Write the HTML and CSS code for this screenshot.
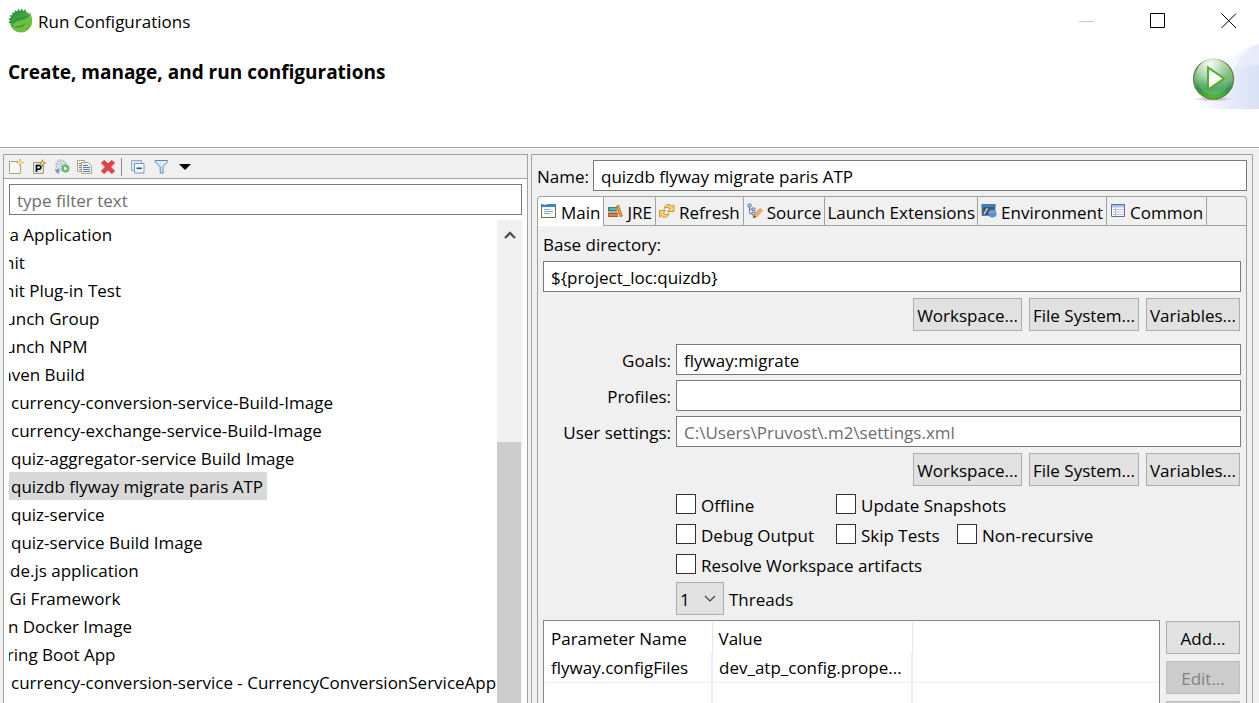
FILE: index.html
```html
<!DOCTYPE html>
<html lang="en">
<head>
<meta charset="utf-8">
<title>Run Configurations</title>
<link rel="stylesheet" href="styles.css">
</head>
<body>
<div class="window">
  <header class="titlebar">
    <svg class="app-icon" width="25" height="25" viewBox="0 0 25 25" aria-hidden="true">
      <defs><linearGradient id="leaf" x1="0" y1="0" x2="0.6" y2="1"><stop offset="0" stop-color="#1f8a43"/><stop offset="1" stop-color="#7cc142"/></linearGradient></defs>
      <circle cx="13" cy="12.500" r="11" fill="url(#leaf)"/>
      <path d="M2 14A11.300 11.300 0 0 1 19 3" fill="none" stroke="#2a9048" stroke-width="2.500" stroke-dasharray="1.600 1.500"/>
      <path d="M22 3c0 5-3 7-8 8-5 .8-9 2-9 6 0 2 .6 3 1.500 4 8 4 16 0 17-7 .5-4 .3-8-1.500-11z" fill="#70bd44"/>
      <path d="M6 17.500c2 2 9 1.500 12-3.500-3 2.500-6 3.300-8 3.500-2 .2-3 .2-4 0z" fill="#16853f"/>
      <path d="M22 3c-2 4-5 4.500-9 5-6 1-9 4-8 8 1-3 5-4 9-5 5-1 8-3 8-8z" fill="#16853f" opacity=".45"/>
    </svg>
    <span class="title">Run Configurations</span>
    <div class="window-controls">
      <button class="win-btn" disabled aria-label="Minimize"><svg width="16" height="16" viewBox="0 0 16 16"><path d="M0 8.500h15" stroke="#c8c8c8"/></svg></button>
      <button class="win-btn" aria-label="Maximize"><svg width="16" height="16" viewBox="0 0 16 16"><path d="M.5 .5h14v14H.5z" fill="none" stroke="#000"/></svg></button>
      <button class="win-btn" aria-label="Close"><svg width="16" height="16" viewBox="0 0 16 16"><path d="M.5 .5l14.500 14.500M15 .5L.5 15" stroke="#000"/></svg></button>
    </div>
  </header>

  <section class="banner">
    <h1 class="heading">Create, manage, and run configurations</h1>
    <svg class="banner-art" width="134" height="67" viewBox="0 -1 134 67" aria-hidden="true">
      <defs>
        <linearGradient id="fade" x1="0" x2="1"><stop offset=".1" stop-color="#d9e2f5" stop-opacity="0"/><stop offset="1" stop-color="#d9e2f5"/></linearGradient>
        <linearGradient id="orb" x1="0" y1="0" x2="0" y2="1"><stop offset="0" stop-color="#9ccb8f"/><stop offset=".5" stop-color="#78bb78"/><stop offset=".75" stop-color="#2d9150"/><stop offset="1" stop-color="#4fc81c"/></linearGradient>
        <radialGradient id="gleam" cx=".4" cy=".2" r=".6"><stop offset="0" stop-color="#fff" stop-opacity=".95"/><stop offset="1" stop-color="#fff" stop-opacity="0"/></radialGradient>
        <radialGradient id="shade"><stop offset="0" stop-color="#705a70" stop-opacity=".6"/><stop offset="1" stop-color="#705a70" stop-opacity="0"/></radialGradient>
      </defs>
      <path d="M134 1C118 5 106 14 98 26 90 40 80 56 66 66h68z" fill="url(#fade)" opacity=".5"/>
      <path d="M134 1c-12 5-20 15-26 27 8-4 17-6 26-6z" fill="#e6ecf9"/>
      <path d="M134 22c-31 1-45 17-66 44h66z" fill="url(#fade)"/>
      <ellipse cx="88" cy="56" rx="20" ry="2.500" fill="url(#shade)"/>
      <circle cx="88.500" cy="36" r="20" fill="url(#orb)" stroke="#65773b" stroke-width="1.200"/>
      <circle cx="88.500" cy="36" r="16" fill="#79bd87" opacity=".5"/>
      <circle cx="88.500" cy="32" r="17" fill="url(#gleam)"/>
      <path d="M83 24.500v22l16-11z" fill="#fff" stroke="#55ae24" stroke-width="2"/>
    </svg>
  </section>

  <main class="content">
    <section class="panel nav-panel" aria-label="Configurations">
      <div class="toolbar" role="toolbar">
        <button class="tool" aria-label="New launch configuration"><svg width="16" height="16" viewBox="0 0 16 16"><path d="M1.500 2.500h8l3 3v9h-11z" fill="#f4f7fc" stroke="#b3a474"/><path d="M12 0v7M8.500 3.500h7" stroke="#d9b13b" stroke-width="1.500"/><path d="M12 2.500v2M11 3.500h2" stroke="#fff"/></svg></button>
        <button class="tool" aria-label="New prototype"><svg width="16" height="16" viewBox="0 0 16 16"><path d="M2.500 3.500h7l3 3v8h-10z" fill="#dce6f5" stroke="#a99c72"/><path d="M5.500 13V6.500H8a1.800 1.800 0 0 1 0 3.700H5.500" fill="none" stroke="#000" stroke-width="1.600"/><path d="M11.500 0l1.200 2.800L15.500 4l-2.800 1.200-1.200 2.800-1.200-2.800L7.500 4l2.800-1.200z" fill="#b78b18"/><path d="M11.500 3v2M10.500 4h2" stroke="#fff"/></svg></button>
        <button class="tool" aria-label="Export"><svg width="16" height="16" viewBox="0 0 16 16"><circle cx="7" cy="6" r="4.500" fill="#e7eaf1" stroke="#b9bed0" stroke-width="2.500" stroke-dasharray="2 .8"/><circle cx="7" cy="6" r="1.500" fill="#fff" stroke="#a8acc4"/><circle cx="11.500" cy="9.500" r="4" fill="#65bb75"/><path d="M10.300 7.500v4l3.200-2z" fill="#fff"/><path d="M1 11h3.500v3.500M4.500 11L2 13.500" fill="none" stroke="#7591bb" stroke-width="1.500"/></svg></button>
        <button class="tool" aria-label="Duplicate"><svg width="16" height="16" viewBox="0 0 16 16"><path d="M.5 1.500h7v11h-7z" fill="#fff" stroke="#b5a576"/><path d="M4.500 3.500h7l3 3v8h-10z" fill="#eaf1fb" stroke="#b5a576"/><path d="M2 4.500h2M2 6.500h2M2 8.500h2M2 10.500h2M6 6.500h5M6 8.500h7M6 10.500h7M6 12.500h7" stroke="#5e7fae"/></svg></button>
        <button class="tool" aria-label="Delete"><svg width="16" height="16" viewBox="0 0 16 16"><path d="M1.500 4L4 1.500 8 5l4-3.500L14.500 4l-4 4 4 4-2.500 2.500-4-3.800-4 3.800L1.500 12l4-4z" fill="#e84242" stroke="#cf3434"/></svg></button>
        <span class="tool-divider"></span>
        <button class="tool" aria-label="Collapse all"><svg width="16" height="16" viewBox="0 0 16 16"><path d="M11.500 4V1.500h-10v10H4" fill="#d9e7f6" stroke="#92a9c4"/><path d="M4.500 4.500h9.500V14H4.500z" fill="#f4faff" stroke="#7998ba"/><path d="M6.500 9.300h5.500" stroke="#1f5fa8" stroke-width="1.600"/></svg></button>
        <button class="tool" aria-label="Filter"><svg width="16" height="16" viewBox="0 0 16 16"><path d="M2 1.500h12.500v1.200L10 7.500V14H7.200V7.500L2 2.700z" fill="#dcecf9" stroke="#6288b0"/></svg></button>
        <button class="tool" aria-label="Filter menu"><svg width="16" height="16" viewBox="0 0 16 16"><path d="M3 5h12l-6 6z" fill="#000"/></svg></button>
      </div>
      <input class="field filter" type="text" placeholder="type filter text" aria-label="Filter text">
      <div class="tree-area">
        <div class="tree-view">
          <ul class="tree">
            <li class="node">Java Application</li>
            <li class="node">JUnit</li>
            <li class="node">JUnit Plug-in Test</li>
            <li class="node">Launch Group</li>
            <li class="node">Launch NPM</li>
            <li class="node">Maven Build</li>
            <li class="node child">currency-conversion-service-Build-Image</li>
            <li class="node child">currency-exchange-service-Build-Image</li>
            <li class="node child">quiz-aggregator-service Build Image</li>
            <li class="node child selected">quizdb flyway migrate paris ATP</li>
            <li class="node child">quiz-service</li>
            <li class="node child">quiz-service Build Image</li>
            <li class="node">Node.js application</li>
            <li class="node">OSGi Framework</li>
            <li class="node">Run Docker Image</li>
            <li class="node">Spring Boot App</li>
            <li class="node child">currency-conversion-service - CurrencyConversionServiceApplication</li>
          </ul>
        </div>
        <div class="scrollbar">
          <button class="scroll-up" aria-label="Scroll up"><svg width="12" height="10" viewBox="0 0 12 10"><path d="M1 8l5-5 5 5" fill="none" stroke="#505050" stroke-width="2.400"/></svg></button>
          <div class="scroll-thumb"></div>
        </div>
      </div>
    </section>

    <section class="panel edit-panel" aria-label="Configuration">
      <div class="name-row">
        <label for="name">Name:</label>
        <input class="field" id="name" type="text" value="quizdb flyway migrate paris ATP">
      </div>
      <div class="tab-folder">
        <div class="tabs" role="tablist">
          <button class="tab active" role="tab" aria-selected="true"><svg width="16" height="16" viewBox="0 0 16 16"><path d="M.5 1.500h14v13H.5z" fill="#f5fbff" stroke="#80712f"/><path d="M0 1h15v3H0z" fill="#3d86c6"/><path d="M2 1.500h4" stroke="#b5d8f2"/><path d="M3 6.500h6M3 8.500h9M3 10.500h6" stroke="#88a9d4"/></svg>Main</button>
          <button class="tab" role="tab"><svg width="16" height="16" viewBox="0 0 16 16"><path d="M1 4h9v4.500H1z" fill="#2d8c79"/><path d="M3 6h7" stroke="#b6dfd3"/><path d="M1 9.500h10V14H1z" fill="#b3542a"/><path d="M2 12h9" stroke="#e8b994"/><path d="M9.500 3l2-1L15.500 13l-2.500 1z" fill="#e5942f" stroke="#b86a1c" stroke-width=".6"/></svg>JRE</button>
          <button class="tab" role="tab"><svg width="16" height="16" viewBox="0 0 16 16"><path d="M5 5.500C6 1 11 .5 13 3.500L15 2v6.500H8.500L11 6C10 4 7 4 5 5.500z" fill="#f5d374" stroke="#c68a27" stroke-width=".9"/><path d="M10 10.500C9 15 4 15.500 2.500 12.500L.5 14V7.500h6L4.500 10c1 2 3.500 2 5.500 .5z" fill="#f5d374" stroke="#c68a27" stroke-width=".9"/></svg>Refresh</button>
          <button class="tab" role="tab"><svg width="16" height="16" viewBox="0 0 16 16"><path d="M1 1h3v3H1zM5 5h3v2.500H5zM5 9h3v3H5z" fill="#cbdaf1" stroke="#6580b2"/><path d="M2.500 4v6.500H5M2.500 6.300H5" fill="none" stroke="#6580b2"/><path d="M6 15l1.500-4L13 5.500l2.500 2L10 13.500z" fill="#f2b35f" stroke="#c3803b" stroke-width=".7"/><path d="M6 15l1-2.800 2 1.800z" fill="#5d4636"/></svg>Source</button>
          <button class="tab text-tab" role="tab">Launch Extensions</button>
          <button class="tab" role="tab"><svg width="16" height="16" viewBox="0 0 16 16"><path d="M1 1.500h13v11H1z" fill="#43566f" stroke="#6f849b"/><path d="M.5 1h14v3H.5z" fill="#3c80bd"/><path d="M3 11l3-5M7 6H5" stroke="#dfe9f2" stroke-width="1.200"/><circle cx="11.500" cy="10.500" r="4" fill="#5792cd"/><path d="M8.500 9c2 1 4-1 6 0" fill="none" stroke="#93bfe3"/></svg>Environment</button>
          <button class="tab" role="tab"><svg width="16" height="16" viewBox="0 0 16 16"><path d="M1.500 1.500h13v12h-13z" fill="#fff" stroke="#566f9b"/><path d="M2 2h12v2.500H2z" fill="#afc0dc"/><path d="M5.500 3v10M3 6.500h11M3 9h11M3 11.500h11" stroke="#b8c2d3"/></svg>Common</button>
        </div>
        <div class="tab-page">
          <label class="base-label" for="base">Base directory:</label>
          <input class="field" id="base" type="text" value="${project_loc:quizdb}">
          <div class="button-row">
            <button class="btn">Workspace...</button>
            <button class="btn">File System...</button>
            <button class="btn">Variables...</button>
          </div>
          <div class="form">
            <label for="goals">Goals:</label>
            <input class="field" id="goals" type="text" value="flyway:migrate">
            <label for="profiles">Profiles:</label>
            <input class="field" id="profiles" type="text">
            <label for="settings">User settings:</label>
            <input class="field" id="settings" type="text" placeholder="C:\Users\Pruvost\.m2\settings.xml">
          </div>
          <div class="button-row">
            <button class="btn">Workspace...</button>
            <button class="btn">File System...</button>
            <button class="btn">Variables...</button>
          </div>
          <div class="options">
            <label class="check"><input type="checkbox"><span>Offline</span></label>
            <label class="check wide"><input type="checkbox"><span>Update Snapshots</span></label>
            <label class="check"><input type="checkbox"><span>Debug Output</span></label>
            <label class="check"><input type="checkbox"><span>Skip Tests</span></label>
            <label class="check"><input type="checkbox"><span>Non-recursive</span></label>
            <label class="check full"><input type="checkbox"><span>Resolve Workspace artifacts</span></label>
          </div>
          <div class="threads">
            <div class="select-wrap">
              <select class="select" id="threads"><option>1</option><option>2</option><option>4</option></select>
              <svg class="chevron" width="12" height="8" viewBox="0 0 12 8" aria-hidden="true"><path d="M1 1l5 5 5-5" fill="none" stroke="#404040" stroke-width="1.200"/></svg>
            </div>
            <label for="threads">Threads</label>
          </div>
          <div class="params">
            <div class="table-box">
              <table class="table">
                <thead><tr><th class="col-name">Parameter Name</th><th class="col-value">Value</th><th></th></tr></thead>
                <tbody>
                  <tr><td>flyway.configFiles</td><td>dev_atp_config.prope...</td><td></td></tr>
                  <tr><td></td><td></td><td></td></tr>
                </tbody>
              </table>
            </div>
            <div class="side-buttons">
              <button class="btn">Add...</button>
              <button class="btn" disabled>Edit...</button>
              <button class="btn" disabled>Remove</button>
            </div>
          </div>
        </div>
      </div>
    </section>
  </main>
</div>
</body>
</html>
```
FILE: styles.css
```css
* { box-sizing: border-box; }

body {
  margin: 0;
  background: #fff;
  color: #000;
  font-family: "Open Sans", "Noto Sans", sans-serif;
  font-size: 17px;
  line-height: 28px;
}

button, input, select {
  margin: 0;
  font: inherit;
  color: inherit;
}

svg { display: block; flex: none; }

.window {
  display: flex;
  flex-direction: column;
  height: 100vh;
  overflow: hidden;
}

/* Title bar */
.titlebar {
  display: flex;
  align-items: center;
  flex: none;
  height: 42px;
  padding: 0 22px 0 8px;
  gap: 5px;
}
.title { padding-top: 2px; }
.window-controls { display: flex; margin-left: auto; gap: 55px; }
.win-btn {
  padding: 0;
  border: 0;
  background: none;
}

/* Banner */
.banner {
  display: flex;
  justify-content: space-between;
  flex: none;
  height: 106px;
  padding-left: 8px;
  border-bottom: 1px solid #a0a0a0;
}
.heading {
  margin: 16px 0 0;
  font-size: 19px;
  font-weight: 700;
  line-height: 28px;
}

/* Body */
.content {
  display: grid;
  grid-template-columns: 525fr 722fr;
  gap: 3px;
  flex: 1;
  min-height: 0;
  padding: 5px 6px 0 3px;
  border-top: 1px solid #fff;
  background: #f0f0f0;
}
.panel {
  display: flex;
  flex-direction: column;
  min-width: 0;
  min-height: 0;
  border: 1px solid #a0a0a0;
  border-bottom: 0;
}

.field {
  width: 100%;
  min-width: 0;
  height: 31px;
  padding: 2px 7px 0;
  border: 1px solid #7a7a7a;
  border-radius: 0;
  background: #fff;
}
.field::placeholder { color: #6d6d6d; opacity: 1; }

/* Left panel */
.nav-panel { background: #fff; }
.toolbar {
  display: flex;
  align-items: center;
  flex: none;
  height: 24px;
  padding-left: 4px;
  gap: 7px;
  border-bottom: 1px solid #a0a0a0;
  background: #f0f0f0;
}
.tool { padding: 0; border: 0; background: none; }
.tool-divider { width: 1px; height: 18px; margin: 0 1px 0 -2px; background: #8c8c8c; }
.filter { width: auto; flex: none; margin: 5px; }
.tree-area {
  display: flex;
  flex: 1;
  min-height: 0;
  margin: 0 5px;
}
.tree-view { flex: 1; min-width: 0; overflow: hidden; }
.tree { margin: 0 0 0 -24px; padding: 0; list-style: none; }
.node {
  width: max-content;
  height: 28px;
  padding: 1px 4px 0 2px;
  white-space: nowrap;
}
.child { margin-left: 24px; }
.selected { background: #d9d9d9; }
.scrollbar {
  display: flex;
  flex-direction: column;
  width: 25px;
  background: #f0f0f0;
}
.scroll-up {
  display: flex;
  justify-content: center;
  align-items: center;
  height: 30px;
  padding: 0;
  border: 0;
  background: none;
}
.scroll-thumb { flex: 1; margin: 192px 1px 0 0; background: #cdcdcd; }

/* Right panel */
.edit-panel { padding: 5px 5px 0; gap: 5px; }
.name-row { display: flex; align-items: center; flex: none; gap: 4px; }
.name-row label { padding-top: 2px; }
.tab-folder {
  display: flex;
  flex-direction: column;
  flex: 1;
  min-height: 0;
  border: 1px solid #a0a0a0;
  border-bottom: 0;
  border-radius: 4px 4px 0 0;
}
.tabs { display: flex; flex: none; height: 29px; border-bottom: 1px solid #a0a0a0; }
.tab {
  display: flex;
  align-items: flex-start;
  height: 28px;
  padding: 2px 3px 0;
  gap: 4px;
  border: 0;
  border-right: 1px solid #a0a0a0;
  background: #f0f0f0;
  white-space: nowrap;
}
.tab svg { margin-top: 4px; }
.text-tab { padding: 2px 2px 0; }
.tab.active { height: 29px; border-radius: 4px 0 0 0; background: #fff; }

.tab-page {
  display: flex;
  flex-direction: column;
  flex: 1;
  min-height: 0;
  padding: 5px 5px 0;
  overflow: hidden;
}
.tab-page > * { flex: none; }
.base-label { padding-bottom: 2px; }
.button-row { display: flex; justify-content: flex-end; gap: 7px; margin: 6px 1px 0 0; }
.btn {
  height: 33px;
  padding: 2px 3px 0;
  border: 1px solid #adadad;
  background: #e1e1e1;
  white-space: nowrap;
}
.btn:disabled { border-color: #bfbfbf; background: #ccc; color: #838383; }

.form {
  display: grid;
  grid-template-columns: 128px 1fr;
  gap: 5px;
  align-items: center;
  margin-top: 13px;
}
.form label { padding-top: 2px; text-align: right; }

.options {
  display: grid;
  grid-template-columns: 160px 121px 1fr;
  margin: 4px 0 0 133px;
}
.check { display: flex; align-items: center; height: 30px; gap: 5px; white-space: nowrap; }
.check span { padding-top: 2px; }
.check input {
  flex: none;
  width: 20px;
  height: 20px;
  margin: 0 0 2px;
  border: 1px solid #333;
  background: #fff;
  appearance: none;
}
.wide { grid-column: span 2; }
.full { grid-column: span 3; }

.threads { display: flex; align-items: center; gap: 5px; margin: 2px 0 0 133px; }
.threads label { padding-top: 2px; }
.select-wrap { position: relative; }
.select {
  width: 48px;
  height: 33px;
  padding: 2px 3px 0;
  border: 1px solid #adadad;
  border-radius: 0;
  background: #e1e1e1;
  appearance: none;
}
.chevron { position: absolute; top: 13px; right: 8px; pointer-events: none; }

.params { display: flex; gap: 6px; margin: 5px 1px 0 0; }
.table-box {
  flex: 1;
  min-width: 0;
  height: 160px;
  padding: 1px 1px 0;
  border: 1px solid #828790;
  background: #fff;
}
.table { width: 100%; border-collapse: collapse; table-layout: fixed; }
.table th, .table td {
  height: 30px;
  padding: 3px 6px 0;
  border-right: 1px solid #e5e5e5;
  font-weight: 400;
  line-height: 26px;
  text-align: left;
  white-space: nowrap;
}
.table td { border-right: 2px solid #e8effa; border-bottom: 1px solid #f0f0f0; }
.table th:last-child, .table td:last-child { border-right: 0; }
.table .col-name { width: 167px; }
.table .col-value { width: 200px; }
.side-buttons { display: flex; flex-direction: column; width: 74px; gap: 7px; padding-top: 1px; }
```
